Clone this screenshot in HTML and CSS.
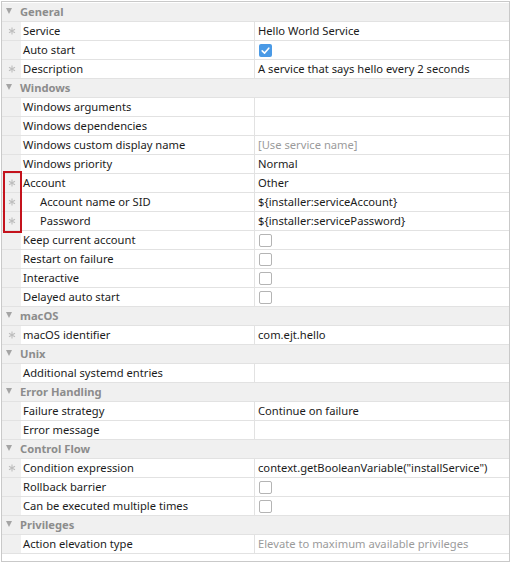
FILE: index.html
```html
<!DOCTYPE html>
<html>
<head>
<meta charset="utf-8">
<link rel="stylesheet" href="styles.css">
</head>
<body>
<div class="sheet">
  <div class="hdr"><span class="tri"></span>General</div>
  <div class="row"><div class="gut"><svg class="ast" viewBox="0 0 8 8"><path d="M4 0.5V7.5M1 2.2L7 5.8M1 5.8L7 2.2"/></svg></div><div class="lbl">Service</div><div class="val">Hello World Service</div></div>
  <div class="row"><div class="gut"></div><div class="lbl">Auto start</div><div class="val"><span class="cb on"><svg viewBox="0 0 13 13" width="13" height="13"><path d="M3.2 6.8 L5.6 9.1 L9.8 4.2" fill="none" stroke="#fff" stroke-width="1.6" stroke-linecap="round" stroke-linejoin="round"/></svg></span></div></div>
  <div class="row"><div class="gut"><svg class="ast" viewBox="0 0 8 8"><path d="M4 0.5V7.5M1 2.2L7 5.8M1 5.8L7 2.2"/></svg></div><div class="lbl">Description</div><div class="val">A service that says hello every 2 seconds</div></div>

  <div class="hdr"><span class="tri"></span>Windows</div>
  <div class="row"><div class="gut"></div><div class="lbl">Windows arguments</div><div class="val"></div></div>
  <div class="row"><div class="gut"></div><div class="lbl">Windows dependencies</div><div class="val"></div></div>
  <div class="row"><div class="gut"></div><div class="lbl">Windows custom display name</div><div class="val ph">[Use service name]</div></div>
  <div class="row"><div class="gut"></div><div class="lbl">Windows priority</div><div class="val">Normal</div></div>
  <div class="row"><div class="gut"><svg class="ast" viewBox="0 0 8 8"><path d="M4 0.5V7.5M1 2.2L7 5.8M1 5.8L7 2.2"/></svg></div><div class="lbl">Account</div><div class="val">Other</div></div>
  <div class="row"><div class="gut"><svg class="ast" viewBox="0 0 8 8"><path d="M4 0.5V7.5M1 2.2L7 5.8M1 5.8L7 2.2"/></svg></div><div class="lbl sub">Account name or SID</div><div class="val">${installer:serviceAccount}</div></div>
  <div class="row"><div class="gut"><svg class="ast" viewBox="0 0 8 8"><path d="M4 0.5V7.5M1 2.2L7 5.8M1 5.8L7 2.2"/></svg></div><div class="lbl sub">Password</div><div class="val">${installer:servicePassword}</div></div>
  <div class="row"><div class="gut"></div><div class="lbl">Keep current account</div><div class="val"><span class="cb"></span></div></div>
  <div class="row"><div class="gut"></div><div class="lbl">Restart on failure</div><div class="val"><span class="cb"></span></div></div>
  <div class="row"><div class="gut"></div><div class="lbl">Interactive</div><div class="val"><span class="cb"></span></div></div>
  <div class="row"><div class="gut"></div><div class="lbl">Delayed auto start</div><div class="val"><span class="cb"></span></div></div>

  <div class="hdr"><span class="tri"></span>macOS</div>
  <div class="row"><div class="gut"><svg class="ast" viewBox="0 0 8 8"><path d="M4 0.5V7.5M1 2.2L7 5.8M1 5.8L7 2.2"/></svg></div><div class="lbl">macOS identifier</div><div class="val">com.ejt.hello</div></div>

  <div class="hdr"><span class="tri"></span>Unix</div>
  <div class="row"><div class="gut"></div><div class="lbl">Additional systemd entries</div><div class="val"></div></div>

  <div class="hdr"><span class="tri"></span>Error Handling</div>
  <div class="row"><div class="gut"></div><div class="lbl">Failure strategy</div><div class="val">Continue on failure</div></div>
  <div class="row"><div class="gut"></div><div class="lbl">Error message</div><div class="val"></div></div>

  <div class="hdr"><span class="tri"></span>Control Flow</div>
  <div class="row"><div class="gut"><svg class="ast" viewBox="0 0 8 8"><path d="M4 0.5V7.5M1 2.2L7 5.8M1 5.8L7 2.2"/></svg></div><div class="lbl">Condition expression</div><div class="val">context.getBooleanVariable("installService")</div></div>
  <div class="row"><div class="gut"></div><div class="lbl">Rollback barrier</div><div class="val"><span class="cb"></span></div></div>
  <div class="row"><div class="gut"></div><div class="lbl">Can be executed multiple times</div><div class="val"><span class="cb"></span></div></div>

  <div class="hdr"><span class="tri"></span>Privileges</div>
  <div class="row"><div class="gut"></div><div class="lbl">Action elevation type</div><div class="val ph">Elevate to maximum available privileges</div></div>

  <div class="mark"></div>
</div>
</body>
</html>
```
FILE: styles.css
```css
html, body {
  margin: 0;
  padding: 0;
  background: #ffffff;
}
body {
  font-family: "Noto Sans", "Open Sans", "DejaVu Sans", sans-serif;
  font-size: 11.2px;
  color: #1b1b1b;
}
.sheet {
  position: relative;
  margin: 1px 0 0 1px;
  width: 509px;
  height: 561px;
  box-sizing: border-box;
  border: 1px solid #c9c9c9;
  padding-top: 1px;
  background: #fff;
  display: flex;
  flex-direction: column;
}
.hdr {
  height: 18px;
  border-bottom: 1px solid #e2e2e2;
  background: #f0f0f0;
  display: flex;
  align-items: center;
  padding-left: 4px;
  font-weight: bold;
  color: #8c8c8c;
  line-height: 18px;
}
.tri {
  width: 0;
  height: 0;
  border-left: 3.5px solid transparent;
  border-right: 3.5px solid transparent;
  border-top: 6px solid #a4a4a4;
  margin-right: 8px;
  margin-top: -2px;
}
.row {
  height: 18px;
  border-bottom: 1px solid #e2e2e2;
  display: grid;
  grid-template-columns: 19px 234px 1fr;
  line-height: 18px;
}
.gut {
  background: #f0f0f0;
  display: flex;
  align-items: center;
  justify-content: center;
}
.ast {
  width: 8px;
  height: 8px;
  display: block;
  fill: none;
  stroke: #bdbdbd;
  stroke-width: 1.1;
}
.lbl {
  padding-left: 2px;
  border-right: 1px solid #e2e2e2;
  white-space: nowrap;
  overflow: hidden;
}
.lbl.sub {
  padding-left: 19px;
}
.val {
  padding-left: 3px;
  white-space: nowrap;
  overflow: hidden;
  display: flex;
  align-items: center;
}
.val.ph {
  color: #9b9b9b;
}
.cb {
  width: 13px;
  height: 13px;
  box-sizing: border-box;
  border: 1px solid #b4b4b4;
  border-radius: 2px;
  background: #fff;
  margin-left: 1px;
  display: block;
}
.cb.on {
  border: none;
  background: #4a9ae6;
}
.cb svg {
  display: block;
}
.mark {
  position: absolute;
  left: 1px;
  top: 169px;
  width: 19px;
  height: 62px;
  box-sizing: border-box;
  border: 2px solid #c4121c;
}
```
